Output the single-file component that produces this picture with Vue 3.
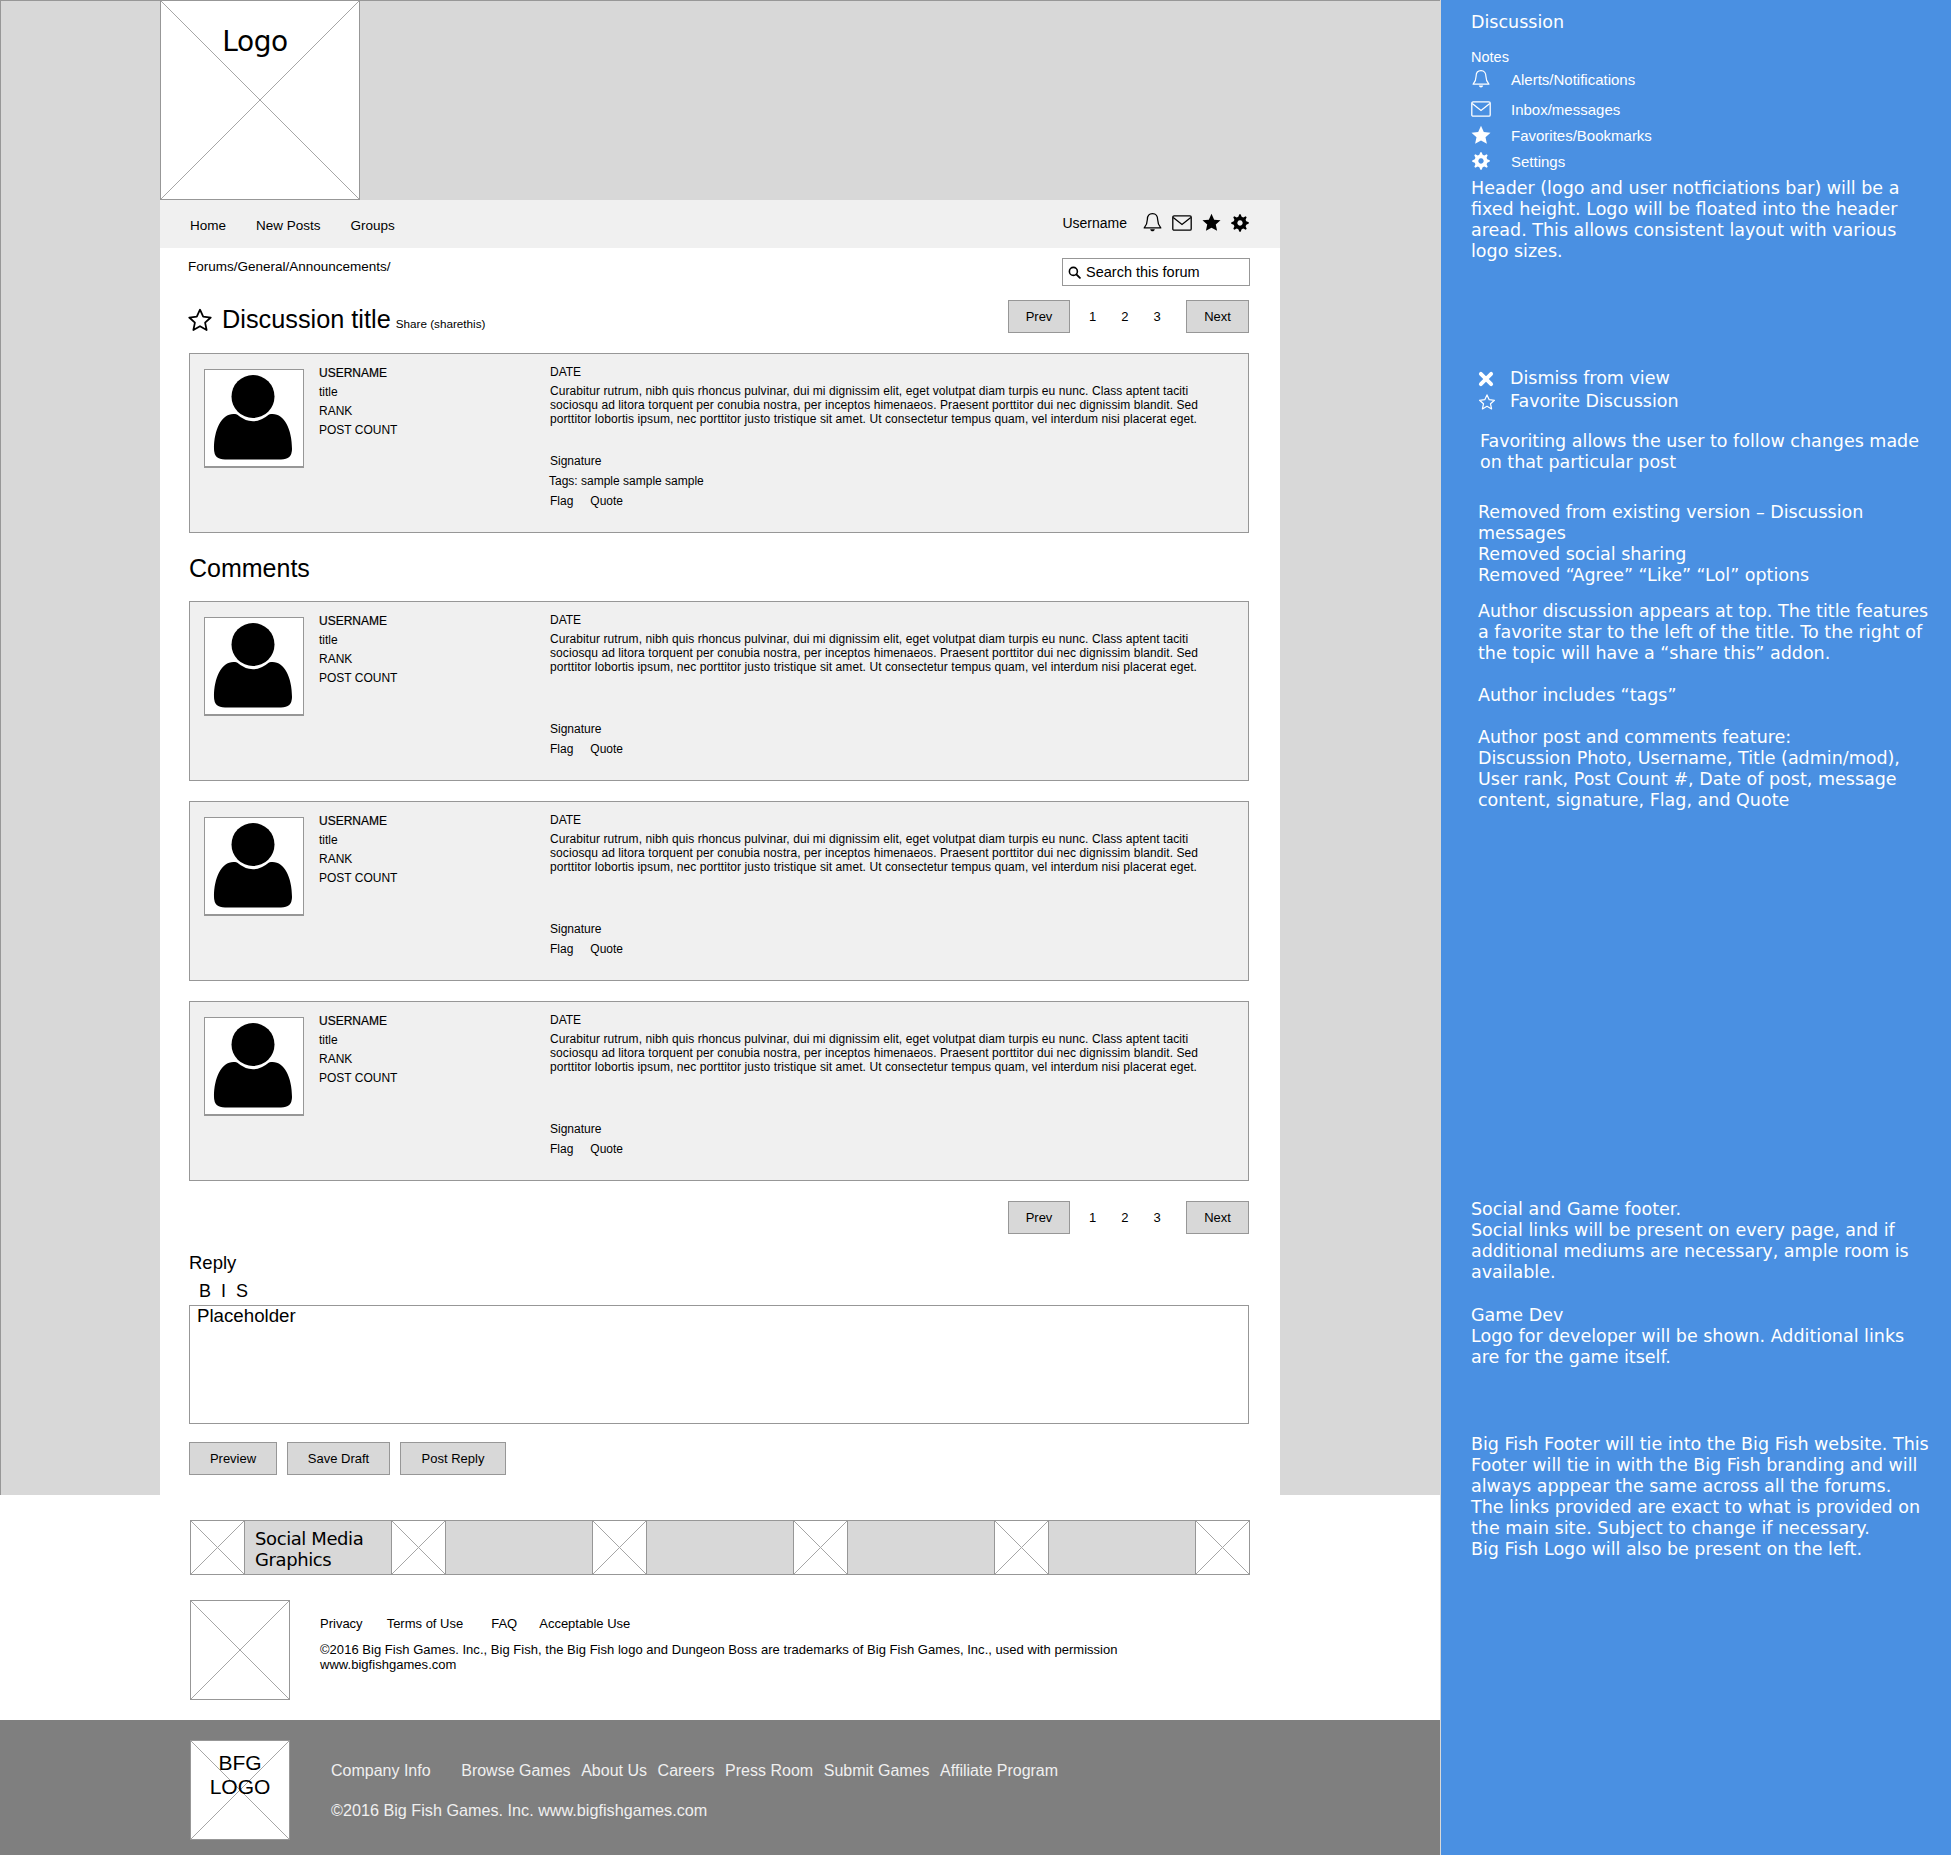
<template>
  <div class="page">
    <svg class="defs" aria-hidden="true">
      <symbol id="i-bell" viewBox="0 0 20 20">
        <path d="M10 1.6c-3.4 0-4.9 2.6-4.9 5.6 0 4-1 5.6-3 8h15.8c-2-2.4-3-4-3-8 0-3-1.500-5.600-4.900-5.600z" fill="none" stroke="currentColor" stroke-width="1.200" stroke-linejoin="round" />
        <path d="M7.800 16.400h4.400c-.3 1.300-1.100 2-2.200 2s-1.900-.7-2.200-2z" fill="currentColor" />
      </symbol>
      <symbol id="i-mail" viewBox="0 0 20 16">
        <rect x="0.800" y="0.800" width="18.400" height="14.400" rx="1.300" fill="none" stroke="currentColor" stroke-width="1.300" />
        <path d="M1.200 2.400 10 9.400l8.800-7" fill="none" stroke="currentColor" stroke-width="1.300" />
      </symbol>
      <symbol id="i-star" viewBox="0 0 20 20">
        <path d="M10 .8l2.800 6.200 6.700.7-5 4.500 1.400 6.600L10 15.400l-5.900 3.400 1.400-6.600-5-4.500 6.700-.7z" fill="currentColor" />
      </symbol>
      <symbol id="i-star-o" viewBox="0 0 22 22">
        <path d="M11 2.300l2.700 5.900 6.400.7-4.800 4.300 1.300 6.300L11 16.300l-5.600 3.200 1.300-6.300-4.800-4.300 6.400-.7z" fill="none" stroke="currentColor" stroke-width="1.500" stroke-linejoin="round" />
      </symbol>
      <symbol id="i-gear" viewBox="0 0 20 20">
        <path :d="gearPath" fill="currentColor" fill-rule="evenodd" />
      </symbol>
      <symbol id="i-search" viewBox="0 0 14 14">
        <circle cx="5.800" cy="5.800" r="4.300" fill="none" stroke="currentColor" stroke-width="1.700" />
        <path d="M9 9l3.800 3.800" stroke="currentColor" stroke-width="2" stroke-linecap="round" />
      </symbol>
      <symbol id="i-x" viewBox="0 0 14 14">
        <path d="M2.500 2.500l9 9M11.500 2.500l-9 9" stroke="currentColor" stroke-width="3.400" stroke-linecap="round" />
      </symbol>
      <symbol id="i-user" viewBox="1 0 98 96">
        <circle cx="49" cy="26.500" r="21.500" fill="currentColor" />
        <path d="M33 44.500Q49 58 65 44.500C79 41 88 58 88 79Q88 89.500 77 89.500H21Q10 89.500 10 79C10 58 19 41 33 44.500Z" fill="currentColor" />
      </symbol>
    </svg>

    <div class="main">
      <div class="stage">
        <div class="column">
          <div class="logo ph"><span>Logo</span></div>

          <nav class="navbar">
            <div class="nav-links">
              <a>Home</a>
              <a>New Posts</a>
              <a>Groups</a>
            </div>
            <div class="nav-user">
              <span class="nav-name">Username</span>
              <svg class="nav-ic bell"><use href="#i-bell" /></svg>
              <svg class="nav-ic mail"><use href="#i-mail" /></svg>
              <svg class="nav-ic star"><use href="#i-star" /></svg>
              <svg class="nav-ic gear"><use href="#i-gear" /></svg>
            </div>
          </nav>

          <div class="content">
            <div class="crumb-row">
              <div class="crumbs">Forums/General/Announcements/</div>
              <div class="search">
                <svg class="search-ic"><use href="#i-search" /></svg>
                Search this forum
              </div>
            </div>

            <div class="title-row">
              <div class="title">
                <svg class="title-star"><use href="#i-star-o" /></svg>
                <h1>Discussion title</h1>
                <span class="share">Share (sharethis)</span>
              </div>
              <div class="pager">
                <span class="btn pg-btn">Prev</span>
                <span class="pg-nums"><span>1</span><span>2</span><span>3</span></span>
                <span class="btn pg-btn next">Next</span>
              </div>
            </div>

            <div class="post" v-for="(p, i) in posts" :key="i" :class="{ first: i === 0, comment: i > 0 }">
              <div class="avatar"><svg><use href="#i-user" /></svg></div>
              <div class="meta">
                <div class="uname">USERNAME</div>
                <div>title</div>
                <div>RANK</div>
                <div>POST COUNT</div>
              </div>
              <div class="body">
                <div class="date">DATE</div>
                <p>Curabitur rutrum, nibh quis rhoncus pulvinar, dui mi dignissim elit, eget volutpat diam turpis eu nunc. Class aptent taciti<br />sociosqu ad litora torquent per conubia nostra, per inceptos himenaeos. Praesent porttitor dui nec dignissim blandit. Sed<br />porttitor lobortis ipsum, nec porttitor justo tristique sit amet. Ut consectetur tempus quam, vel interdum nisi placerat eget.</p>
                <div class="post-foot">
                  <div>Signature</div>
                  <div v-if="p.tags" class="tags">Tags: sample sample sample</div>
                  <div class="actions"><span>Flag</span><span>Quote</span></div>
                </div>
              </div>
              <h2 v-if="i === 0" class="comments-title">Comments</h2>
            </div>

            <div class="pager bottom">
              <span class="btn pg-btn">Prev</span>
              <span class="pg-nums"><span>1</span><span>2</span><span>3</span></span>
              <span class="btn pg-btn next">Next</span>
            </div>

            <div class="reply-title">Reply</div>
            <div class="format"><span>B</span><span>I</span><span>S</span></div>
            <div class="editor">Placeholder</div>
            <div class="reply-actions">
              <span class="btn prev-b">Preview</span>
              <span class="btn save-b">Save Draft</span>
              <span class="btn post-b">Post Reply</span>
            </div>
          </div>
        </div>
      </div>

      <div class="under">
        <div class="social">
          <template v-for="n in 5" :key="n">
            <div class="ph soc-x"></div>
            <div class="soc-g">{{ n === 1 ? 'Social Media Graphics' : '' }}</div>
          </template>
          <div class="ph soc-x"></div>
        </div>
        <div class="game">
          <div class="ph game-logo"></div>
          <div class="game-text">
            <div class="game-links">
              <a>Privacy</a><a>Terms of Use</a><a>FAQ</a><a>Acceptable Use</a>
            </div>
            <div class="legal">©2016 Big Fish Games. Inc., Big Fish, the Big Fish logo and Dungeon Boss are trademarks of Big Fish Games, Inc., used with permission<br />www.bigfishgames.com</div>
          </div>
        </div>
      </div>

      <footer class="bigfish">
        <div class="ph bf-logo"><span>BFG<br />LOGO</span></div>
        <div class="bf-text">
          <div class="bf-links">
            <a class="company">Company Info</a>
            <a>Browse Games</a><a>About Us</a><a>Careers</a><a>Press Room</a><a>Submit Games</a><a>Affiliate Program</a>
          </div>
          <div class="bf-copy">©2016 Big Fish Games. Inc. www.bigfishgames.com</div>
        </div>
      </footer>
    </div>

    <aside class="notes">
      <div class="n-title">Discussion</div>
      <div class="n-label">Notes</div>
      <ul class="legend">
        <li class="l1"><svg class="leg-ic"><use href="#i-bell" /></svg>Alerts/Notifications</li>
        <li class="l2"><svg class="leg-ic"><use href="#i-mail" /></svg>Inbox/messages</li>
        <li class="l3"><svg class="leg-ic"><use href="#i-star" /></svg>Favorites/Bookmarks</li>
        <li class="l4"><svg class="leg-ic small"><use href="#i-gear" /></svg>Settings</li>
      </ul>
      <p class="n n-head">Header (logo and user notficiations bar) will be a<br />fixed height. Logo will be floated into the header<br />aread. This allows consistent layout with various<br />logo sizes.</p>

      <div class="n n-marks">
        <div class="mark"><svg class="mark-x"><use href="#i-x" /></svg>Dismiss from view</div>
        <div class="mark"><svg class="mark-star"><use href="#i-star-o" /></svg>Favorite Discussion</div>
      </div>
      <p class="n n-fav">Favoriting allows the user to follow changes made<br />on that particular post</p>
      <p class="n n-removed">Removed from existing version – Discussion<br />messages<br />Removed social sharing<br />Removed “Agree” “Like” “Lol” options</p>
      <p class="n n-author">Author discussion appears at top. The title features<br />a favorite star to the left of the title. To the right of<br />the topic will have a “share this” addon.</p>
      <p class="n n-gap">Author includes “tags”</p>
      <p class="n n-gap">Author post and comments feature:<br />Discussion Photo, Username, Title (admin/mod),<br />User rank, Post Count #, Date of post, message<br />content, signature, Flag, and Quote</p>

      <p class="n n-social">Social and Game footer.<br />Social links will be present on every page, and if<br />additional mediums are necessary, ample room is<br />available.</p>
      <p class="n n-dev">Game Dev<br />Logo for developer will be shown. Additional links<br />are for the game itself.</p>
      <p class="n n-bf">Big Fish Footer will tie into the Big Fish website. This<br />Footer will tie in with the Big Fish branding and will<br />always apppear the same across all the forums.<br />The links provided are exact to what is provided on<br />the main site. Subject to change if necessary.<br />Big Fish Logo will also be present on the left.</p>
    </aside>
  </div>
</template>

<script setup>
const posts = [{ tags: true }, { tags: false }, { tags: false }, { tags: false }]

// cog outline, 8 teeth with a round hole
function makeGear() {
  const pts = []
  const teeth = 8
  for (let i = 0; i < teeth; i++) {
    const a = (i / teeth) * Math.PI * 2 - Math.PI / 2
    const step = (Math.PI * 2) / teeth
    const ring = [
      [7.2, -0.5],
      [9.8, -0.27],
      [9.8, -0.08],
      [7.2, 0.16]
    ]
    ring.forEach(([r, f]) => {
      const t = a + f * step + step * 0.17
      pts.push((10 + r * Math.cos(t)).toFixed(2) + ' ' + (10 + r * Math.sin(t)).toFixed(2))
    })
  }
  return 'M' + pts.join('L') + 'Z M10 7a3 3 0 1 0 .01 0Z'
}

const gearPath = makeGear()
</script>

<style>
html,
body {
  margin: 0;
  background: #fff;
}
</style>

<style scoped>
.page {
  display: flex;
  width: 1951px;
  height: 1855px;
  overflow: hidden;
  font-family: "Liberation Sans", Arial, sans-serif;
  color: #000;
}

.defs {
  position: absolute;
  width: 0;
  height: 0;
}

.main {
  width: 1440px;
  flex: none;
  display: flex;
  flex-direction: column;
}

.stage {
  height: 1495px;
  box-sizing: border-box;
  background: #d8d8d8;
  border-left: 1px solid #979797;
  border-top: 1px solid #979797;
  padding-left: 159px;
}

.column {
  width: 1120px;
  height: 100%;
}

.ph {
  box-sizing: border-box;
  border: 1px solid #979797;
  background-color: #fff;
  background-image:
    linear-gradient(to top right, transparent calc(50% - 0.6px), #a6a6a6 50%, transparent calc(50% + 0.6px)),
    linear-gradient(to bottom right, transparent calc(50% - 0.6px), #a6a6a6 50%, transparent calc(50% + 0.6px));
}

.logo {
  width: 200px;
  height: 199px;
  padding-top: 23px;
  text-align: center;
  border-top: 0;
}

.logo span {
  display: block;
  margin-right: 10px;
  font: 28px/36px "DejaVu Sans", sans-serif;
  letter-spacing: -0.4px;
}

.navbar {
  height: 48px;
  background: #f0f0f0;
  display: flex;
  align-items: center;
  justify-content: space-between;
  padding: 0 31px 0 30px;
  font-size: 13.5px;
}

.nav-links {
  display: flex;
  gap: 30px;
  margin-top: 2px;
}

.nav-user {
  display: flex;
  align-items: center;
  margin-top: -3px;
}

.nav-name {
  margin-right: 15px;
  font-size: 14px;
}

.nav-ic {
  display: block;
}

.bell {
  width: 21px;
  height: 21px;
  margin-right: 9px;
}

.mail {
  width: 20px;
  height: 16px;
  margin-right: 10px;
}

.star {
  width: 19px;
  height: 19px;
  margin-right: 10px;
}

.gear {
  width: 18px;
  height: 18px;
}

.content {
  background: #fff;
  height: 1247px;
  padding: 0 31px 0 29px;
  box-sizing: border-box;
}

.crumb-row {
  display: flex;
  justify-content: space-between;
  align-items: flex-start;
  height: 52px;
  padding-top: 10px;
  box-sizing: border-box;
  font-size: 13.5px;
  margin-left: -1px;
}

.crumbs {
  line-height: 18px;
}

.search {
  width: 188px;
  height: 28px;
  box-sizing: border-box;
  border: 1px solid #979797;
  background: #fff;
  display: flex;
  align-items: center;
  font-size: 14.5px;
  padding-left: 5px;
  gap: 5px;
  margin-right: -1px;
  white-space: nowrap;
}

.search-ic {
  width: 13px;
  height: 13px;
  flex: none;
}

.title-row {
  display: flex;
  justify-content: space-between;
  align-items: flex-start;
  height: 53px;
}

.title {
  display: flex;
  align-items: baseline;
  height: 33px;
  margin-top: 3px;
  margin-left: -1px;
}

.title-star {
  width: 26px;
  height: 26px;
  margin-right: 9px;
  align-self: center;
  margin-left: -1px;
}

.title h1 {
  font-size: 25.3px;
  line-height: 33px;
  font-weight: 400;
  margin: 0 5px 0 0;
}

.share {
  font-size: 11.7px;
}

.pager {
  display: flex;
  align-items: center;
  width: 241px;
}

.pager.bottom {
  margin: 1px 0 0 auto;
}

.btn {
  display: flex;
  align-items: center;
  justify-content: center;
  height: 33px;
  box-sizing: border-box;
  background: #d8d8d8;
  border: 1px solid #979797;
  font-size: 13px;
}

.pg-btn {
  width: 62px;
}

.pg-btn.next {
  margin-left: auto;
  width: 63px;
}

.pg-nums {
  display: flex;
  gap: 25px;
  margin-left: 19px;
  font-size: 13px;
}

.post {
  position: relative;
  box-sizing: border-box;
  height: 180px;
  background: #f0f0f0;
  border: 1px solid #979797;
  font-size: 12px;
  display: flex;
  margin-bottom: 20px;
}

.post.first {
  margin-bottom: 68px;
}

.avatar {
  width: 100px;
  height: 99px;
  box-sizing: border-box;
  flex: none;
  background: #fff;
  border: 1px solid #979797;
  border-bottom-width: 2px;
  margin: 15px 0 0 14px;
}

.avatar svg {
  display: block;
  width: 98px;
  height: 96px;
}

.meta {
  width: 231px;
  flex: none;
  margin: 10px 0 0 15px;
  line-height: 19px;
}

.uname {
  -webkit-text-stroke: 0.2px #000;
}

.body {
  display: flex;
  flex-direction: column;
  min-width: 0;
  white-space: nowrap;
}

.date {
  line-height: 19px;
  margin-top: 9px;
}

.body p {
  margin: 2px 0 0;
  line-height: 14px;
  letter-spacing: 0.08px;
}

.post-foot {
  margin-top: auto;
  margin-bottom: 21px;
  line-height: 20px;
}

.tags {
  margin-left: -1px;
}

.actions {
  display: flex;
  gap: 17px;
}

.comments-title {
  position: absolute;
  left: -1px;
  top: 196px;
  margin: 0;
  font-size: 25px;
  line-height: 36px;
  font-weight: 400;
}

.reply-title {
  font-size: 18.5px;
  line-height: 24px;
  margin-top: 17px;
}

.format {
  display: flex;
  gap: 10px;
  font-size: 18px;
  line-height: 22px;
  padding-left: 10px;
  margin-top: 5px;
}

.editor {
  height: 119px;
  box-sizing: border-box;
  border: 1px solid #979797;
  background: #fff;
  font-size: 18.7px;
  line-height: 20px;
  padding: 0 7px;
  margin-top: 3px;
}

.reply-actions {
  display: flex;
  gap: 10px;
  margin-top: 18px;
}

.prev-b {
  width: 88px;
}

.save-b {
  width: 103px;
}

.post-b {
  width: 106px;
}

.under {
  height: 225px;
  padding: 25px 0 0 190px;
  box-sizing: border-box;
  background: #fff;
}

.social {
  display: flex;
  height: 55px;
  width: 1060px;
  box-sizing: border-box;
  border-top: 1px solid #979797;
  border-bottom: 1px solid #979797;
}

.soc-x {
  width: 55px;
  flex: none;
  border-top: 0;
  border-bottom: 0;
  margin-right: -1px;
}

.soc-g {
  width: 146px;
  flex: none;
  margin-left: 1px;
  box-sizing: border-box;
  background: #d8d8d8;
  font: 18px/21px "DejaVu Sans", sans-serif;
  letter-spacing: -0.4px;
  padding: 7px 0 0 10px;
}

.social .soc-x:last-child {
  margin-right: 0;
}

.game {
  display: flex;
  margin-top: 25px;
}

.game-logo {
  width: 100px;
  height: 100px;
  flex: none;
}

.game-text {
  margin-left: 30px;
  font-size: 13px;
  padding-top: 16px;
}

.game-links {
  display: flex;
  line-height: 16px;
}

.game-links a:nth-child(1) {
  margin-right: 24px;
}

.game-links a:nth-child(2) {
  margin-right: 28px;
}

.game-links a:nth-child(3) {
  margin-right: 22px;
}

.legal {
  margin-top: 10px;
  line-height: 15px;
  letter-spacing: 0.03px;
  white-space: nowrap;
}

.bigfish {
  flex: 1;
  background: #7f7f7f;
  display: flex;
  padding: 20px 0 0 190px;
  color: #fff;
}

.bf-logo {
  width: 100px;
  height: 100px;
  flex: none;
  color: #000;
  text-align: center;
  font-size: 21px;
  line-height: 24px;
  padding-top: 10px;
}

.bf-text {
  margin-left: 41px;
  font-size: 16px;
  line-height: 20px;
  padding-top: 21px;
  color: #f0f0f0;
}

.bf-links {
  display: flex;
  gap: 10.6px;
  white-space: nowrap;
}

.company {
  margin-right: 20px;
}

.bf-copy {
  margin-top: 19px;
  font-size: 16.2px;
}

.notes {
  flex: 1;
  box-sizing: border-box;
  background: #4a90e2;
  border-left: 1px solid #d8d8d8;
  color: #fff;
  padding-left: 30px;
  font-family: "DejaVu Sans", sans-serif;
  white-space: nowrap;
}

.n-title {
  font-size: 17.5px;
  line-height: 22px;
  padding-top: 11px;
}

.n-label {
  font-family: "Liberation Sans", sans-serif;
  font-size: 14.5px;
  line-height: 16px;
  margin-top: 16px;
}

.legend {
  list-style: none;
  margin: 0;
  padding: 0;
  font-family: "Liberation Sans", sans-serif;
  font-size: 15px;
}

.legend li {
  display: flex;
  align-items: center;
  height: 26px;
}

.legend .l1 {
  margin-top: 1px;
  height: 26px;
}

.legend .l2 {
  margin-top: 4px;
}

.legend .l3,
.legend .l4 {
  height: 26px;
}

.leg-ic {
  width: 20px;
  height: 20px;
  margin-right: 20px;
  flex: none;
}

.leg-ic.small {
  width: 18px;
  height: 18px;
  margin: 0 21px 0 1px;
}

.n {
  margin: 0;
  font-size: 17.5px;
  line-height: 21px;
}

.n-head {
  margin-top: 4px;
}

.n-marks {
  margin-top: 105px;
}

.mark {
  display: flex;
  align-items: center;
  height: 23px;
  padding-left: 7px;
}

.mark-x {
  width: 16px;
  height: 16px;
  margin-right: 16px;
}

.mark-star {
  width: 18px;
  height: 18px;
  margin-right: 14px;
}

.n-fav {
  margin: 18px 0 0 9px;
}

.n-removed {
  margin: 29px 0 0 7px;
}

.n-author {
  margin: 15px 0 0 7px;
}

.n-gap {
  margin: 21px 0 0 7px;
}

.n-social {
  margin-top: 388px;
}

.n-dev {
  margin-top: 22px;
}

.n-bf {
  margin-top: 66px;
}
</style>
